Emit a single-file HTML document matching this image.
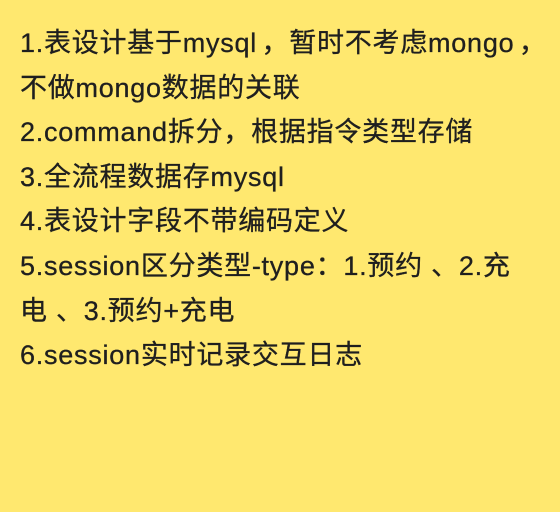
<!DOCTYPE html>
<html><head><meta charset="utf-8"><style>
html,body{margin:0;padding:0;width:560px;height:512px;background:#FFE86F;overflow:hidden}
.t{position:absolute;left:20px;top:21px;width:540px;font-family:"Liberation Sans","Noto Sans CJK SC",sans-serif;font-size:27px;letter-spacing:0.75px;line-height:44.6px;color:#1f1f1f;-webkit-text-stroke:0.3px #1f1f1f;white-space:nowrap}
.s{letter-spacing:-3px}
</style></head><body>
<div class="t">1.表设计基于mysql<span class="s"> </span>，暂时不考虑mongo<span class="s"> </span>，<br>不做mongo数据的关联<br>2.command拆分，根据指令类型存储<br>3.全流程数据存mysql<br>4.表设计字段不带编码定义<br>5.session区分类型-type：1.预约 、2.充<br>电 、3.预约+充电<br>6.session实时记录交互日志</div>
</body></html>
